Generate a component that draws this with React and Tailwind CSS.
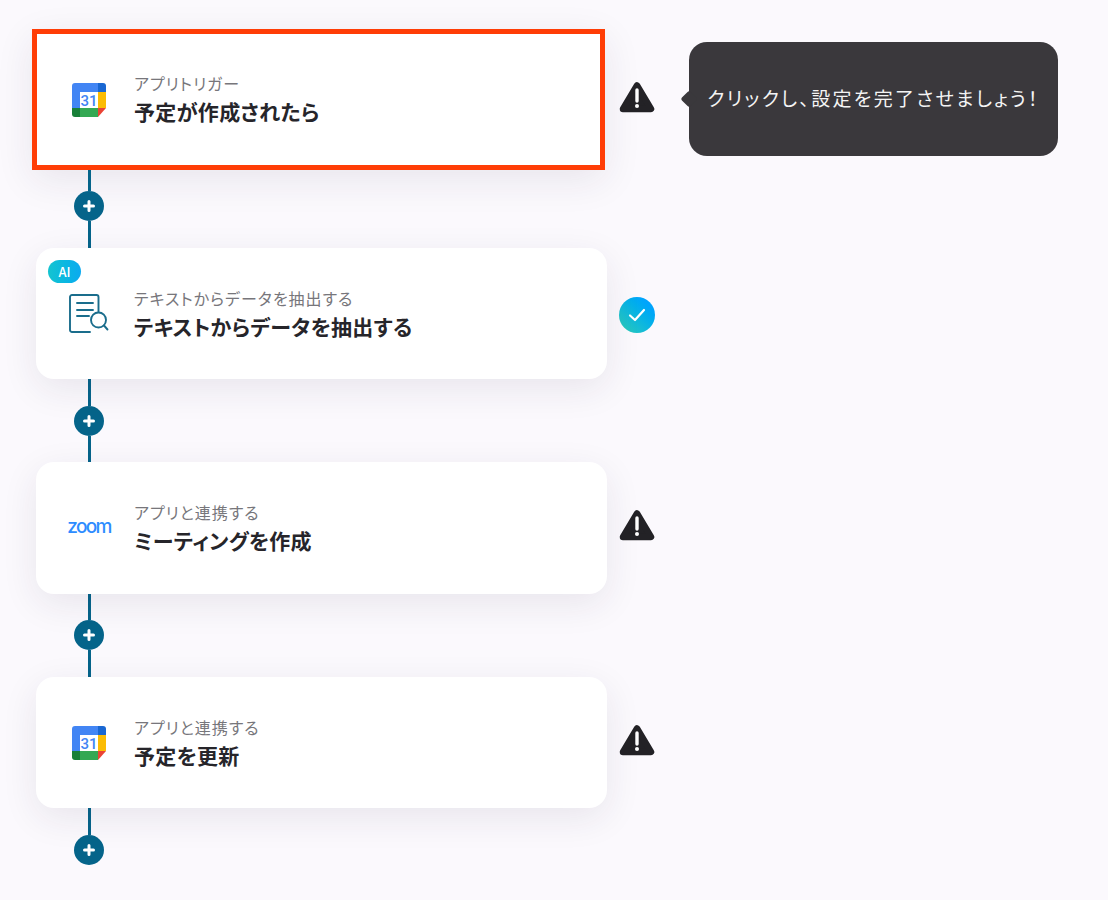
import React from "react";

const CalendarIcon = () => (
  <svg width="34" height="34" viewBox="0 0 34 34">
    <path d="M3 0H26V9H8V25H0V3A3 3 0 0 1 3 0Z" fill="#4285f4" />
    <path d="M26 0H31A3 3 0 0 1 34 3V9H26Z" fill="#1967d2" />
    <rect x="26" y="9" width="8" height="16" fill="#fbbc04" />
    <path d="M8 25H26V34H8Z" fill="#34a853" />
    <path d="M0 25H8V34H3A3 3 0 0 1 0 31Z" fill="#188038" />
    <path d="M26 25H34L26 34Z" fill="#ea4335" />
    <rect x="8" y="9" width="18" height="16" fill="#ffffff" />
    <text x="17" y="22.500" textAnchor="middle" fontSize="15" fontWeight="500" fill="#4285f4" fontFamily="Roboto, sans-serif">
      31
    </text>
  </svg>
);

const DocSearchIcon = () => (
  <svg width="40" height="40" viewBox="0 0 40 40" fill="none" stroke="#1a6d8c" strokeWidth="1.900" strokeLinecap="round">
    <path d="M21 38H3A2 2 0 0 1 1 36V3A2 2 0 0 1 3 1H27.500A2 2 0 0 1 29.500 3V18" />
    <path d="M8 9H24M8 16H24M8 22H20" />
    <circle cx="29.500" cy="26" r="7.500" />
    <path d="M35 31.500L38.500 35.500" />
  </svg>
);

const WarningIcon = () => (
  <svg width="36" height="32" viewBox="0 0 36 32" className="mb-[6px]">
    <path d="M18 4.500L32 28H4Z" fill="#232226" stroke="#232226" strokeWidth="6.500" strokeLinejoin="round" />
    <path d="M18 9V20" stroke="#ffffff" strokeWidth="3.400" strokeLinecap="round" />
    <circle cx="18" cy="25" r="2" fill="#ffffff" />
  </svg>
);

const CheckIcon = () => (
  <div className="mt-[3px] flex h-9 w-9 items-center justify-center rounded-full bg-linear-to-tr from-[#28c8bc] from-10% to-[#00a4fc] to-80%">
    <svg width="20" height="20" viewBox="0 0 20 20" fill="none" stroke="#ffffff" strokeWidth="2.200" strokeLinecap="round" strokeLinejoin="round">
      <path d="M3 10.500L8 15L17 5" />
    </svg>
  </div>
);

const Connector = ({ top, bottom }) => (
  <div className="ml-[38px] flex w-[30px] flex-col items-center">
    <div className="w-[3px] bg-[#05648a]" style={{ height: top }} />
    <div className="flex h-[30px] w-[30px] items-center justify-center rounded-full bg-[#05648a]">
      <svg width="14" height="14" viewBox="0 0 14 14" stroke="#ffffff" strokeWidth="3" strokeLinecap="round">
        <path d="M7 2.500V11.500M2.500 7H11.500" />
      </svg>
    </div>
    {bottom > 0 && <div className="w-[3px] bg-[#05648a]" style={{ height: bottom }} />}
  </div>
);

const CardText = ({ label, title }) => (
  <div className="flex flex-col [font-feature-settings:'palt']">
    <span className="text-[16px] leading-[22px] tracking-[1px] text-[#77767b]">{label}</span>
    <span className="mt-[2px] text-[21px] leading-[30px] font-bold tracking-[0.3px] text-[#26252a]">{title}</span>
  </div>
);

const Card = ({ icon, label, title, badge, height }) => (
  <div className="relative flex w-[571px] items-center rounded-[18px] bg-white pl-[28px] shadow-[0_10px_36px_rgba(40,30,70,0.09)]" style={{ height }}>
    {badge && (
      <span className="absolute left-[12px] top-[12px] flex h-[23px] w-[33px] items-center justify-center rounded-full bg-linear-to-r from-[#14c4d0] to-[#0caaf0] text-[13px] font-medium text-white">
        AI
      </span>
    )}
    <div className="flex w-[50px] items-center justify-center">{icon}</div>
    <div className="ml-[20px]">
      <CardText label={label} title={title} />
    </div>
  </div>
);

export default function App() {
  return (
    <div className="min-h-[900px] bg-[#fbf9fd] pl-[36px] pt-[29px] font-['Noto_Sans_CJK_JP','Noto_Sans',sans-serif]">
      <div className="flex items-center">
        <div className="-ml-[4px] flex h-[141px] w-[573px] items-center border-[5px] border-[#ff3d06] bg-white pl-[27px] shadow-[0_10px_36px_rgba(40,30,70,0.09)]">
          <div className="flex w-[50px] items-center justify-center">
            <CalendarIcon />
          </div>
          <div className="mb-[2px] ml-[20px]">
            <CardText label="アプリトリガー" title="予定が作成されたら" />
          </div>
        </div>
        <div className="ml-[14px] flex items-center">
          <WarningIcon />
        </div>
        <div className="relative mb-[2px] ml-[34px] flex h-[114px] w-[369px] items-center justify-center rounded-[18px] bg-[#3a383c] text-[19px] tracking-[2.300px] text-[#f4f4f4] [font-feature-settings:'palt']">
          <span className="absolute -left-[6px] top-[51px] h-[12px] w-[12px] rotate-45 rounded-[2px] bg-[#3a383c]" />
          クリックし、設定を完了させましょう！
        </div>
      </div>

      <Connector top={21} bottom={27} />

      <div className="flex items-center">
        <Card height={131} badge icon={<DocSearchIcon />} label="テキストからデータを抽出する" title="テキストからデータを抽出する" />
        <div className="ml-[12px]">
          <CheckIcon />
        </div>
      </div>

      <Connector top={27} bottom={26} />

      <div className="flex items-center">
        <Card
          height={132}
          icon={<span className="-mt-[3px] font-['Inter',sans-serif] text-[19px] leading-none font-medium tracking-[-1.700px] text-[#2d8cff]">zoom</span>}
          label="アプリと連携する"
          title="ミーティングを作成"
        />
        <div className="ml-[12px]">
          <WarningIcon />
        </div>
      </div>

      <Connector top={26} bottom={27} />

      <div className="flex items-center">
        <Card height={131} icon={<CalendarIcon />} label="アプリと連携する" title="予定を更新" />
        <div className="ml-[12px]">
          <WarningIcon />
        </div>
      </div>

      <Connector top={27} bottom={0} />
    </div>
  );
}
